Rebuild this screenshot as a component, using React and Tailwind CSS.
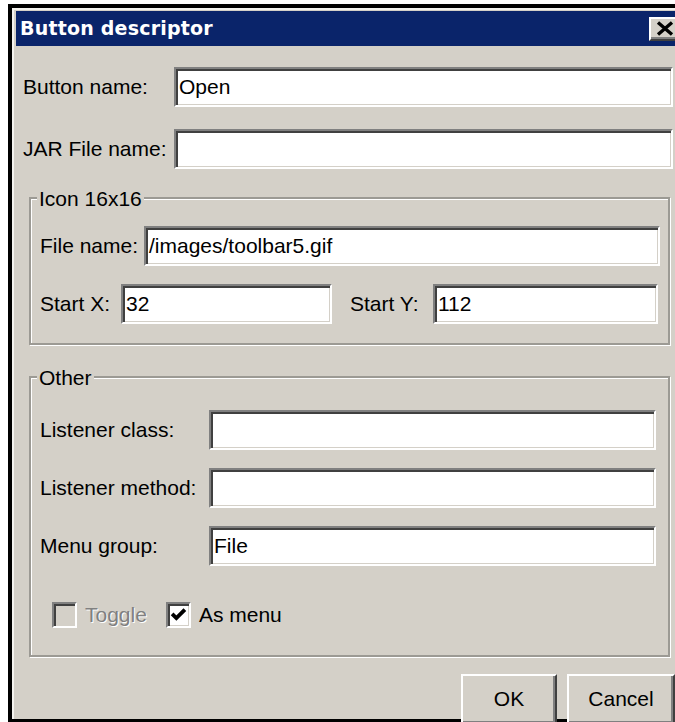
import React from 'react'

// classic 3D bevels
const SUNKEN =
  'border-2 border-t-[#808080] border-l-[#808080] border-b-white border-r-white shadow-[inset_2px_2px_0_#404040,inset_-1px_-1px_0_#d4d0c8]'
const RAISED =
  'bg-[#d4d0c8] border-2 border-t-white border-l-white border-b-[#404040] border-r-[#404040] shadow-[inset_-2px_-2px_0_#808080]'

function TextField({ value = '', className = '' }) {
  return (
    <div className={`${SUNKEN} bg-white h-[40px] flex items-center pl-[3px] text-black whitespace-nowrap overflow-hidden ${className}`}>
      {value}
    </div>
  )
}

function GroupBox({ title, className = '', children }) {
  return (
    <div className={`border-2 border-[#9c9a94] shadow-[inset_1px_1px_0_#fff,1px_1px_0_#fff] ${className}`}>
      <div className="-mt-[12px] ml-[6px] w-fit px-[2px] h-[24px] leading-[24px] bg-[#d4d0c8]">{title}</div>
      {children}
    </div>
  )
}

function CheckBox({ label, checked, disabled }) {
  return (
    <div className="flex items-center gap-[8px]">
      <div className={`${SUNKEN} w-[25px] h-[26px] flex items-center justify-center ${disabled ? 'bg-[#d4d0c8]' : 'bg-white'}`}>
        {checked && (
          <svg width="17" height="15" viewBox="0 0 8 7">
            <path d="M1 3.2 L3 5.2 L7 1.2" fill="none" stroke="#000" strokeWidth="1.8" />
          </svg>
        )}
      </div>
      <span className={disabled ? 'text-[#808080] [text-shadow:1px_1px_0_#fff]' : 'text-black'}>{label}</span>
    </div>
  )
}

export default function App() {
  return (
    <div className="w-[675px] h-[722px] overflow-hidden bg-white font-['Liberation_Sans',Arial,sans-serif] text-[21px] text-black">
      <div className="ml-[8px] mt-[4px] w-fit border-4 border-black">
        <div className="border-t-2 border-l-2 border-[#f4f3ef] pt-[1px] pl-[2px] bg-[#d4d0c8]">
          {/* title bar */}
          <div className="w-[667px] h-[35px] bg-[#0a246a] flex items-center pl-[4px]">
            <span className="font-['DejaVu_Sans',sans-serif] font-bold text-[19px] text-white tracking-[0.2px]">
              Button descriptor
            </span>
            <div className={`${RAISED} ml-auto mr-[2px] w-[32px] h-[24px] flex items-center justify-center pr-[1px]`}>
              <svg width="18" height="15" viewBox="0 0 18 15">
                <path d="M2 1.5 L16 13.5 M16 1.5 L2 13.5" stroke="#000" strokeWidth="3.4" />
              </svg>
            </div>
          </div>

          {/* dialog body */}
          <div className="w-[667px] h-[673px] flex flex-col pt-[21px]">
            <div className="ml-[7px] grid grid-cols-[151px_499px] gap-y-[22px] items-center">
              <span>Button name:</span>
              <TextField value="Open" className="h-[39px]" />
              <span>JAR File name:</span>
              <TextField className="h-[39px]" />
            </div>

            <GroupBox title="Icon 16x16" className="mt-[28px] ml-[13px] w-[641px]">
              <div className="pl-[9px] pt-[15px] pb-[19px] flex flex-col gap-[18px]">
                <div className="flex items-center">
                  <span className="w-[104px]">File name:</span>
                  <TextField value="/images/toolbar5.gif" className="w-[516px]" />
                </div>
                <div className="flex items-center">
                  <span className="w-[81px]">Start X:</span>
                  <TextField value="32" className="w-[211px]" />
                  <span className="ml-[18px] w-[83px]">Start Y:</span>
                  <TextField value="112" className="w-[225px]" />
                </div>
              </div>
            </GroupBox>

            <GroupBox title="Other" className="mt-[31px] ml-[13px] w-[641px]">
              <div className="pl-[9px] pt-[20px] pb-[24px] flex flex-col">
                <div className="flex flex-col gap-[18px]">
                  {[
                    ['Listener class:', ''],
                    ['Listener method:', ''],
                    ['Menu group:', 'File'],
                  ].map(([label, value]) => (
                    <div key={label} className="flex items-center">
                      <span className="w-[169px]">{label}</span>
                      <TextField value={value} className="w-[447px]" />
                    </div>
                  ))}
                </div>
                <div className="mt-[33px] ml-[12px] flex items-center gap-[19px]">
                  <CheckBox label="Toggle" disabled />
                  <CheckBox label="As menu" checked />
                </div>
              </div>
            </GroupBox>

            <div className="mt-[17px] flex justify-end pr-[8px] gap-[10px]">
              <button className={`${RAISED} w-[96px] h-[51px] flex items-center justify-center`}>OK</button>
              <button className={`${RAISED} w-[108px] h-[51px] flex items-center justify-center`}>Cancel</button>
            </div>
          </div>
        </div>
      </div>
    </div>
  )
}
